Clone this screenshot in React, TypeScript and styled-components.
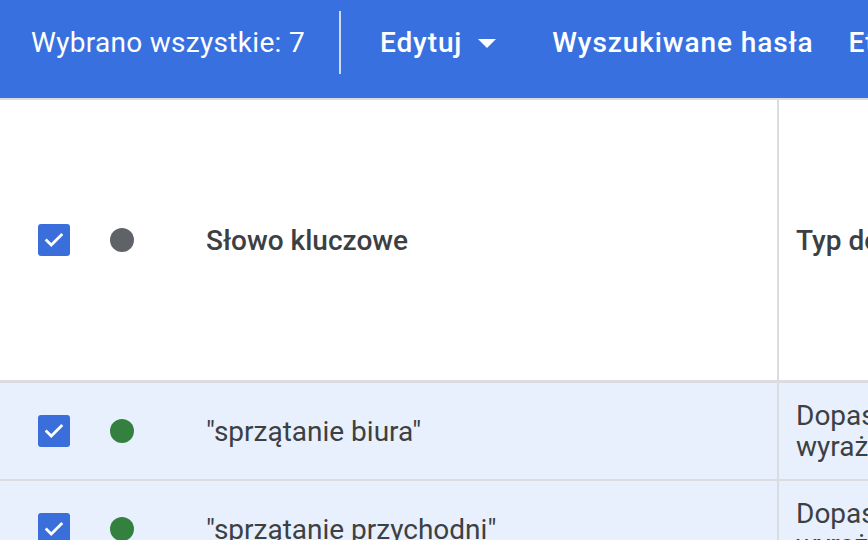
import styled, { createGlobalStyle } from 'styled-components';

const GlobalStyle = createGlobalStyle`
    html, body {
        margin: 0;
        padding: 0;
        background: #ffffff;
        overflow: hidden;
    }
    body {
        font-family: Roboto, 'Noto Sans', 'Liberation Sans', sans-serif;
    }
`;

type Keyword = { text: string; match: string[] };

const keywords: Keyword[] = [
    { text: '"sprzątanie biura"', match: ['Dopasowanie do', 'wyrażenia'] },
    { text: '"sprzątanie przychodni"', match: ['Dopasowanie do', 'wyrażenia'] },
];

const Check = () => (
    <svg width="22" height="22" viewBox="0 0 24 24">
        <path d="M4 12.5l5 5L20 6.5" fill="none" stroke="#fff" strokeWidth="3" strokeLinecap="square" />
    </svg>
);

const App = () => {
    return (
        <Page>
            <GlobalStyle />
            <Toolbar>
                <Selected>Wybrano wszystkie: 7</Selected>
                <Divider />
                <ToolButton $space={39}>
                    Edytuj
                    <Caret />
                </ToolButton>
                <ToolButton $space={56}>Wyszukiwane hasła</ToolButton>
                <ToolButton $space={35}>Etykiety</ToolButton>
            </Toolbar>
            <HeaderRow>
                <MainCell>
                    <Checkbox>
                        <Check />
                    </Checkbox>
                    <Dot color="#5f6368" />
                    <HeaderText>Słowo kluczowe</HeaderText>
                </MainCell>
                <SideCell>
                    <HeaderText>Typ dopasowania</HeaderText>
                </SideCell>
            </HeaderRow>
            {keywords.map((k) => (
                <Row key={k.text}>
                    <MainCell>
                        <Checkbox>
                            <Check />
                        </Checkbox>
                        <Dot color="#34803f" />
                        <CellText>{k.text}</CellText>
                    </MainCell>
                    <SideCell>
                        <CellText>
                            {k.match[0]}
                            <br />
                            {k.match[1]}
                        </CellText>
                    </SideCell>
                </Row>
            ))}
        </Page>
    );
};

export default App;

const Page = styled.div`
    width: 868px;
    height: 540px;
    overflow: hidden;
    background: #fff;
`;

const Toolbar = styled.div`
    box-sizing: content-box;
    height: 84px;
    padding: 0 0 14px 31px;
    background: #3871df;
    border-bottom: 2px solid #dadce0;
    display: flex;
    align-items: center;
    color: #fff;
    font-size: 28px;
    white-space: nowrap;
    overflow: hidden;
    & > * {
        flex-shrink: 0;
    }
`;

const Selected = styled.span`
    letter-spacing: 0.3px;
`;

const Divider = styled.div`
    width: 2px;
    height: 63px;
    background: rgba(255, 255, 255, 0.75);
    margin-left: 34px;
`;

const ToolButton = styled.span<{ $space: number }>`
    display: flex;
    align-items: center;
    font-weight: 500;
    letter-spacing: 0.9px;
    margin-left: ${(p) => p.$space}px;
`;

const Caret = styled.span`
    width: 0;
    height: 0;
    border-left: 9px solid transparent;
    border-right: 9px solid transparent;
    border-top: 9px solid #fff;
    margin-left: 16px;
    margin-top: 2px;
`;

const HeaderRow = styled.div`
    display: grid;
    grid-template-columns: 779px 1fr;
    height: 280px;
    border-bottom: 3px solid #dadce0;
`;

const Row = styled.div`
    display: grid;
    grid-template-columns: 779px 1fr;
    height: 96px;
    background: #e8f0fe;
    border-bottom: 2px solid #dadce0;
`;

const MainCell = styled.div`
    display: flex;
    align-items: center;
    padding-left: 38px;
    border-right: 2px solid #dadce0;
`;

const SideCell = styled.div`
    display: flex;
    align-items: center;
    padding-left: 17px;
    white-space: nowrap;
    overflow: hidden;
`;

const Checkbox = styled.div`
    width: 32px;
    height: 32px;
    border-radius: 3px;
    background: #3a6fdb;
    display: flex;
    align-items: center;
    justify-content: center;
    margin-right: 40px;
    flex-shrink: 0;
`;

const Dot = styled.div<{ color: string }>`
    width: 24px;
    height: 24px;
    border-radius: 50%;
    background: ${(p) => p.color};
    margin-right: 72px;
    flex-shrink: 0;
`;

const HeaderText = styled.span`
    font-size: 28px;
    font-weight: 500;
    color: #3c4043;
`;

const CellText = styled.span`
    font-size: 28px;
    color: #3c4043;
    line-height: 31px;
`;
